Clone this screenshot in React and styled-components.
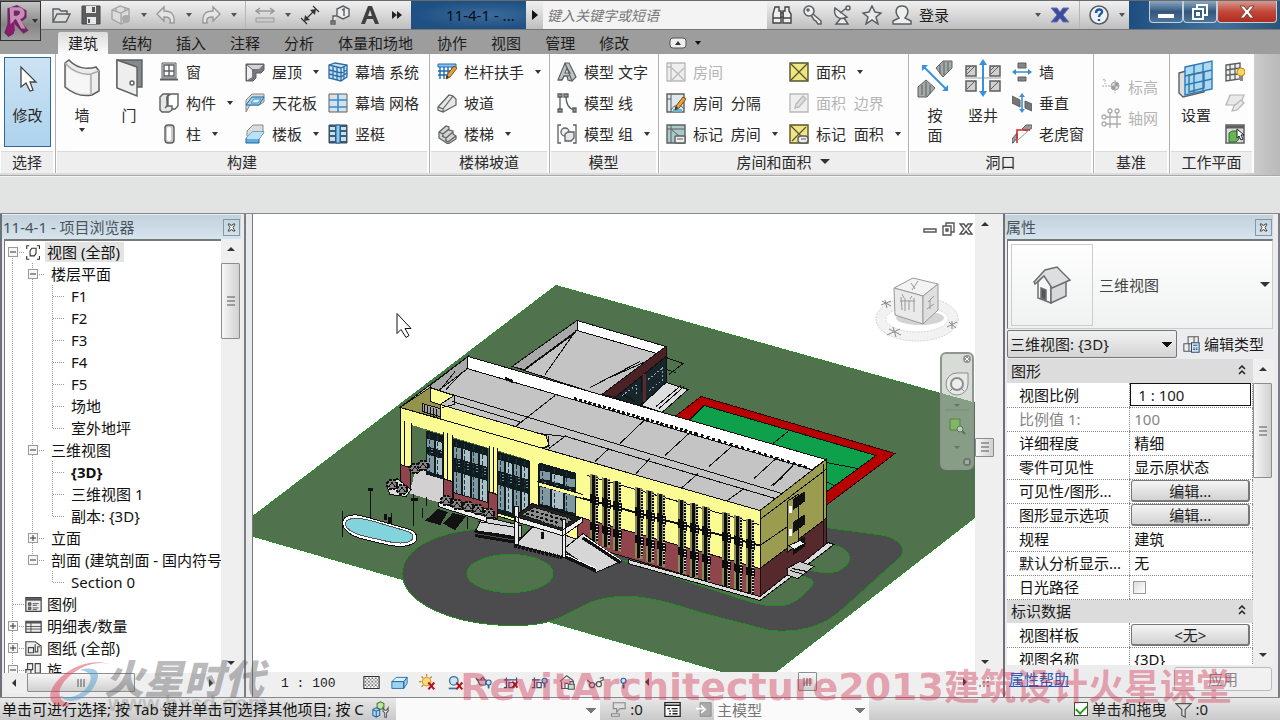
import React from "react";
import styled, { createGlobalStyle, css } from "styled-components";

const Global = createGlobalStyle`
  * { box-sizing: border-box; }
  html, body, #root { height: 100%; }
  body {
    margin: 0;
    overflow: hidden;
    font: 15px/20px "Noto Sans", "Noto Sans CJK SC", sans-serif;
    color: #1d1d1d;
    background: #e2e3e3;
  }
  button, input, select { font: inherit; color: inherit; margin: 0; border-radius: 0; }
  button { padding: 0; border: 0; background: none; white-space: pre; }
  svg { display: block; flex: none; }
`;

/* ---------- icons ---------- */

const K = "#5c5f61";
const G = "#e6e6e6";
const B = "#3a8ccb";
const S = "#a9d4ee";

const pencil = (
  <g>
    <path d="M9 17 L10 13 L17 4 L20 6 L13 15 Z" fill="#e9a33b" stroke="#7a4a12" strokeWidth="1" />
    <path d="M9 17 L10 13 L12 15 Z" fill="#333" />
  </g>
);

const ICONS = {
  window: <g fill="#fff" stroke={K}><path d="M3 1h14v15H3z" fill={G} /><path d="M5 3h5v6H5zM10 3h5v6h-5zM5 9h5v5H5zM10 9h5v5h-5z" strokeWidth="1.4" /><path d="M1 17.500h18" strokeWidth="2" /></g>,
  component: <g fill={G} stroke={K} strokeWidth="1.4"><path d="M9 3l3-2h7v12l-3 3H9z" fill="#fff" /><path d="M10 1H4L1 4v13l2 2h7l3-2v-4H8V4z" /><path d="M8 4v9l-2 2" /></g>,
  column: <g><rect x="6" y="1" width="9" height="18" rx="3" fill="#c9c9c9" stroke={K} strokeWidth="1.4" /><rect x="8" y="3" width="4" height="14" rx="2" fill="#fff" /></g>,
  roof: <g><path d="M1 2h18v6l-3 3h-5v5l-3 3H1z" fill="#77777d" stroke={K} /><path d="M2 3h16l-4 4H7v8l-5 3z" fill="#d4d4d8" /><path d="M2 3l5 4v8l-5 3z" fill="#efeff2" /><path d="M1 2l8 7" fill="none" stroke={K} /></g>,
  ceiling: <g><path d="M1 19V7l6-6h12v8l-5 3H5z" fill="#d8d8d8" stroke="#888" /><path d="M1 12l6-8h12l-5 8z" fill={S} stroke="#20659c" /><path d="M6 10l3-4h7l-3 4z" fill="#d9effb" stroke={B} /></g>,
  floor: <g><path d="M2 12V7l6-6h10v9" fill="#dcdcdc" stroke="#888" /><path d="M1 14l6-6h12l-5 7v4H1z" fill="#61aee0" stroke="#20659c" /><path d="M1 14l6-6h12l-5 7H3z" fill="#bce0f5" /></g>,
  curtain: <g fill="#c5e3f4" stroke="#2a6da5" strokeWidth="1.3"><path d="M1 3l6-2 12 2v12l-6 4-12-3z" /><path d="M13 6v13M1 3l12 3 6-3M1 8l12 3 6-3M1 12l12 3 6-4M5 4v13M9 5v13M16 5v12" fill="none" /></g>,
  curtainGrid: <g><path d="M1 1h18v18H1z" fill="#d5e2ea" stroke={K} /><path d="M10 1v18M1 7h18M1 14h18" stroke={B} strokeWidth="1.6" /></g>,
  mullion: <g><path d="M1 1h18v18H1z" fill="#3c5d74" stroke="#3b4a55" /><path d="M2 3h5v3H2zM2 8h5v3H2zM2 13h5v4H2zM13 3h5v3h-5zM13 8h5v3h-5zM13 13h5v4h-5z" fill="#c4dfee" /><path d="M8 1h4v18H8z" fill="#8dc9ee" stroke="#1f5f92" /></g>,
  railing: <g><path d="M1 2h18v3H1z" fill="#8dc3ea" stroke="#1f6cae" /><path d="M1 9h15M3 5v12M7 5v12M11 5v7M15 5v5M1 13h9" stroke="#1f6cae" strokeWidth="1.4" />{pencil}</g>,
  ramp: <g stroke={K} fill={G} strokeWidth="1.2"><path d="M1 14L12 2l4 1 3 3v6L6 19l-5-2z" /><path d="M1 14l5 2v3M6 16L16 3" fill="none" /></g>,
  stair: <g stroke={K} fill="#d2d2d2" strokeWidth="1.2"><path d="M2 8l7-6 3 1v3l4 1v3l3 2v3l-8 5-9-6z" /><path d="M2 8l4 2 6-5M5 12l4 2 7-6M8 16l3 2 8-6M6 10v3M9 14v3" fill="none" /></g>,
  modelText: <g stroke={K} strokeWidth="1.2"><path d="M1 18L8 1h4l7 14-4 4-4-1-1-4H7l-2 4z" fill="#bfc4c4" /><path d="M8 11l2-5 3 5z" fill="#fff" /><path d="M1 18h4l2-4h5M8 1l7 18" fill="none" /></g>,
  modelLine: <g fill="none" stroke={K} strokeWidth="1.3"><path d="M3 3v14M9 3c0 8 2 13 9 14" /><path d="M1 1h4v3H1zM1 16h4v3H1zM7 1h4v3H7zM16 15h3v4h-3z" fill="#999" /></g>,
  modelGroup: <g fill="none" stroke={K} strokeWidth="1.3"><path d="M4 1H1v18h3M16 1h3v18h-3" /><circle cx="8" cy="8" r="4" fill="#eee" /><path d="M8 10l3-2h6v6l-3 3H8z" fill={G} /></g>,
  roomOff: <g stroke="#b9b9b9" fill="#eee" strokeWidth="1.3"><path d="M1 1h18v18H1z" /><path d="M5 1v18M1 5h5M6 6l12 12M18 6L6 18" /></g>,
  roomSep: <g><path d="M1 1h17v18H1z" fill="#dbe8ec" stroke={K} strokeWidth="1.4" /><path d="M5 1v18M1 6h4M5 17c3-6 10-6 13-1" stroke={K} fill="none" /><path d="M7 16h9v3H7z" fill="#66b3da" />{pencil}</g>,
  roomTag: <g><path d="M1 1h18v18H1z" fill="#a9c9c8" stroke={K} strokeWidth="1.4" /><path d="M5 1v18M1 5h18" stroke={K} /><path d="M6 6l7 6" stroke={K} /><rect x="9" y="12" width="10" height="7" rx="1" fill="#eee" stroke={K} strokeWidth="1.4" /><path d="M11 15h6" stroke={K} /></g>,
  area: <g stroke="#57522c"><path d="M1 1h18v18H1z" fill="#eee583" strokeWidth="1.4" /><path d="M2 2l16 16M18 2L2 18" strokeWidth="1.2" /></g>,
  areaOff: <g stroke="#b9b9b9" fill="#efefef" strokeWidth="1.3"><path d="M1 1h18v18H1z" /><path d="M6 15l1-4 7-8 3 3-7 8z" fill="#ddd" /></g>,
  areaTag: <g><path d="M1 1h18v18H1z" fill="#eee583" stroke="#57522c" strokeWidth="1.4" /><path d="M2 2l15 15M17 3L3 17" stroke="#57522c" strokeWidth="1.2" /><rect x="9" y="12" width="10" height="7" rx="3" fill="#eee" stroke={K} strokeWidth="1.4" /><path d="M12 15h5" stroke={K} /></g>,
  openWall: <g><path d="M6 1h8v5H6zM6 15h8v4H6z" fill="#858585" stroke={K} /><path d="M2 10h16" stroke={B} strokeWidth="1.5" /><path d="M0 10l4-3v6zM20 10l-4-3v6z" fill={B} /></g>,
  vertical: <g><path d="M0 3l8 4v7l-8-4zM13 8l7 3v7l-7-3z" fill="#777" stroke={K} /><path d="M10 2v16" stroke="#3c92d8" strokeWidth="1.6" /><path d="M10 0l-3 4h6zM10 20l-3-4h6z" fill="#3c92d8" /></g>,
  dormer: <g><path d="M0 19v-4l5-6v5l-4 5zM10 5l4-4h6v3l-5 3z" fill="#999" stroke={K} /><path d="M5 19V6h13" fill="none" stroke="#d02b2b" strokeWidth="1.6" /><path d="M6 16L17 6" stroke="#999" /></g>,
  level: <g stroke="#aaa" fill="none"><path d="M1 9h17M2 3l2-1v5M14 3v13" strokeDasharray="2 1" /><circle cx="14" cy="9" r="4" fill="#ddd" /><path d="M14 5v4h4a4 4 0 0 0-4-4M14 13V9h-4a4 4 0 0 0 4 4" fill="#999" /></g>,
  grid: <g stroke="#aaa" fill="#fff" strokeWidth="1.3"><path d="M9 5v15M16 5v15M5 9h15M5 16h15" /><circle cx="9" cy="3" r="2" /><circle cx="16" cy="3" r="2" /><circle cx="3" cy="9" r="2" /><circle cx="3" cy="16" r="2" /></g>,
  showPlane: <g><path d="M1 3l14-2v16L1 19z" fill="#eee" stroke={K} strokeWidth="1.4" /><path d="M5 3v15M10 2v16M1 8l14-2M1 13l14-1" stroke={K} strokeWidth="1.3" /><circle cx="16" cy="10" r="4" fill="#ffd65a" stroke="#c48a16" /><path d="M15 14h3v5h-3z" fill="#888" /></g>,
  refPlane: <g stroke="#b3b3b3" fill="#e9e9e9" strokeWidth="1.2"><path d="M5 2h14l-4 10H1z" /><path d="M7 18l2-5 7-6 3 3-7 7z" /></g>,
  viewer: <g><path d="M1 1h18v18H1z" fill="#ddd" stroke={K} strokeWidth="1.5" /><path d="M1 3h18" stroke={K} strokeWidth="3" /><path d="M4 9l3-2h7v8l-3 3H4z" fill="#68b558" stroke="#2f6b28" /><path d="M12 5v9l2-2 2 4 2-1-2-4h3z" fill="#fff" stroke="#222" /></g>,
  open: <path d="M2 17V4h6l2 2h6v4M2 17l4-8h13l-4 8z" fill="#ddd" stroke={K} strokeWidth="1.4" />,
  save: <g><path d="M1 1h18v18H1z" fill="#5a5e61" stroke="#444" /><path d="M5 1h10v7H5zM6 12h9v7H6z" fill="#e8e8e8" /><path d="M11 2h3v5h-3zM7 14h2v4H7z" fill="#555" /></g>,
  box3d: <g stroke="#a2a2a2" fill="#dcdcdc" strokeWidth="1.3"><path d="M1 5l8-4 9 3v11l-8 4-9-5z" /><path d="M1 5l9 3 8-4M10 8v11M5 3v4M14 2v4" fill="none" /><circle cx="15" cy="14" r="4" fill="#aaa" stroke="none" /></g>,
  undo: <path d="M1 9l7-7v4c7 0 11 3 10 12h-4c1-5-1-6-6-6v4z" fill="#e5e5e5" stroke="#999" strokeWidth="1.4" />,
  redo: <path d="M19 9l-7-7v4C5 6 1 9 2 18h4c-1-5 1-6 6-6v4z" fill="#e5e5e5" stroke="#999" strokeWidth="1.4" />,
  measure: <g stroke="#999" fill="#ccc"><path d="M2 6h16M5 3L1 6l4 3M15 3l4 3-4 3" fill="none" strokeWidth="1.5" /><path d="M1 13h18v4H1z" /></g>,
  dimension: <g stroke="#333" strokeWidth="1.6"><path d="M5 15L15 5M1 13l6 6M13 1l6 6" strokeWidth="1.2" /><path d="M4 16l1-6 5 5zM16 4l-6 1 5 5z" fill="#333" stroke="none" /></g>,
  tag: <g stroke={K} fill="none" strokeWidth="1.4"><path d="M13 1l6 3v7l-6 3-6-3V4zM3 18v-7h4" fill="#eee" /><path d="M1 16h4v3H1zM12 5l2-1v7" /></g>,
  text: <path d="M1 19L8 1h4l7 18h-4l-2-5H7l-2 5zM8 11h4l-2-6z" fill="#404040" fillRule="evenodd" />,
  binoculars: <g stroke="#444" strokeWidth="1.4" fill="#eee"><path d="M3 2h4v4h2v12H1V9zM13 2h4v4l2 3v9h-8V6h2z" /><path d="M9 8h2v4H9zM1 13h8M11 13h8" /></g>,
  key: <g stroke={K} strokeWidth="1.5" fill="#eee"><path d="M11 9l8 7v3h-3l-2-3-2-1-3-5z" /><circle cx="7" cy="6" r="5" /><circle cx="6" cy="5" r="1" fill={K} /></g>,
  dish: <g stroke={K} strokeWidth="1.5" fill="#eee"><path d="M9 13l-5 6h12l-4-6" /><path d="M3 3c-2 8 4 13 12 9zM8 8l8-6" /><circle cx="16" cy="3" r="2" /></g>,
  star: <path d="M10 1l3 6 6 1-5 4 2 7-6-4-6 4 2-7-5-4 6-1z" fill="#e9e9e9" stroke={K} strokeWidth="1.5" />,
  person: <path d="M7 13c-5-6-3-12 3-12s8 6 3 12l6 3v3H1v-3z" fill="#eee" stroke={K} strokeWidth="1.5" />,
  exchange: <path d="M1 3h6l3 4 3-4h6l-6 7 6 7h-6l-3-4-3 4H1l6-7z" fill="#3c4b9e" stroke="#6a74ae" />,
  help: <g><circle cx="10" cy="10" r="9" fill="#eff3f7" stroke={K} strokeWidth="1.6" /><path d="M7 8c0-5 7-4 6-1 0 2-3 2-3 5M10 14v2" fill="none" stroke="#1c5aa8" strokeWidth="2.4" /></g>,
  binder: <g stroke="#333" fill="none" strokeWidth="1.3"><path d="M5 2H2v4M14 2h3v4M2 14v4h3M17 14v4h-3M6 8l2-3h5v6l-2 3H6z" /></g>,
  legend: <g stroke="#444" fill="#fff"><path d="M1 2h18v16H1z" fill="#eee" strokeWidth="1.4" /><path d="M1 4h18" strokeWidth="3" stroke="#555" /><path d="M4 8h3v3H4zM4 13h3v3H4z" fill="#777" /><path d="M9 9h7M9 11h5M9 14h7M9 16h5" /></g>,
  schedule: <g stroke="#444" fill="#eee"><path d="M1 4h18v13H1z" strokeWidth="1.4" /><path d="M1 5h18" strokeWidth="3" stroke="#555" /><path d="M1 10h18M1 13h18M7 6v11" /></g>,
  sheet: <g stroke="#444" fill="#eee" strokeWidth="1.3"><path d="M1 2h11l7 5v11H1z" /><path d="M4 9h6v6H4zM12 5v9h3V8h3" fill="none" /></g>,
  family: <g stroke="#444" fill="#eee" strokeWidth="1.4"><path d="M1 9h6v8H1zM3 2h6v7H3zM12 2h6v11h-6zM9 15h9" /></g>,
  editType: <g stroke="#555" fill="#eee" strokeWidth="1.2"><path d="M6 1h7v8H6zM13 1h5v8h-5zM1 9h6v9H1zM7 9h5v9H7z" /><path d="M10 8h9v11h-9z" fill="#d8e8f6" stroke="#274e78" /><path d="M12 11h5M12 14h2M15 14h2M12 16h2M15 16h2" stroke="#274e78" /></g>,
  hatch: <g><path d="M1 3h18v14H1z" fill="#fff" stroke="#333" strokeWidth="1.3" /><path d="M2 5h17M2 9h17M2 13h17" stroke="#777" strokeWidth="2" strokeDasharray="2 2" /><path d="M4 7h14M4 11h14M4 15h14" stroke="#999" strokeWidth="2" strokeDasharray="2 2" /></g>,
  cube: <g stroke="#20659c" fill="#9bd3f3"><path d="M1 9l5-5h13l-4 5z" fill="#d9f0fb" /><path d="M1 9h14v8H1zM15 9l4-5v7l-4 6z" /></g>,
  sunOff: <g><circle cx="9" cy="9" r="5" fill="#fbd878" stroke="#c68614" /><path d="M9 0v3M0 9h3M3 3l2 2M15 3l-2 2M3 15l2-2" stroke="#c68614" strokeWidth="1.5" /><path d="M11 10l7 8M18 10l-7 8" stroke="#b1121d" strokeWidth="2.4" /></g>,
  shadowOff: <g><circle cx="8" cy="8" r="5" fill="#cbe3f5" stroke="#3c6f9e" strokeWidth="1.5" /><path d="M2 17h9" stroke="#3c6f9e" strokeWidth="2" /><path d="M11 10l7 8M18 10l-7 8" stroke="#b1121d" strokeWidth="2.4" /></g>,
  teapot: <g stroke="#555" fill="#eee" strokeWidth="1.3"><path d="M1 5l3 2h9l-1 6H6L4 9zM6 7l3-3 3 3" /><circle cx="16" cy="10" r="3" fill="#cfe4fa" stroke="#27619c" /><path d="M16 13v4" stroke="#27619c" strokeWidth="2" /></g>,
  cropOff: <g stroke="#3a4c70" fill="none" strokeWidth="1.4"><path d="M1 7h15M4 4v12M1 16h4M7 10h6v6H7zM16 4v12" /><path d="M11 9l6 7M17 9l-6 7" stroke="#b1121d" strokeWidth="2" /></g>,
  crop: <g stroke="#3a4c70" fill="none" strokeWidth="1.4"><path d="M1 7h10M4 4v12M1 16h4M7 10h5v6H7z" /><circle cx="16" cy="8" r="3" fill="#cfe4fa" stroke="#27619c" /><path d="M16 11v5" stroke="#27619c" strokeWidth="2" /></g>,
  lockHouse: <g stroke="#555" fill="#eee" strokeWidth="1.3"><path d="M1 9l8-7 8 6M3 9v8h8M7 17v-6h4" /><path d="M11 12h7v6h-7z" fill="#c9dccd" /><path d="M13 12V9h4v3" fill="none" /></g>,
  glasses: <g stroke="#555" fill="none" strokeWidth="1.4"><path d="M0 7l5 4M9 12h2M15 9l4-2V4l-4 1" /><circle cx="6" cy="13" r="3" /><circle cx="14" cy="12" r="3" /></g>,
  bulb: <g><circle cx="10" cy="8" r="3" fill="#cfe4fa" stroke="#27619c" strokeWidth="1.4" /><path d="M10 12v5" stroke="#27619c" strokeWidth="2.4" /></g>,
  worksets: <g stroke="#27619c" fill="#a9d8f2" strokeWidth="1.2"><path d="M6 3l4-2 4 2v5l-4 2-4-2z" fill="#c0e6a5" stroke="#3e7c24" /><path d="M1 10l4-2 4 2v7l-4 2-4-2zM1 10l4 2 4-2M5 12v7" /><path d="M13 8v4l2 2v5h2v-5l2-2V8l-2 3h-2z" fill="#eee" stroke="#555" /></g>,
  request: <g stroke="#888" fill="#ddd" strokeWidth="1.3"><path d="M5 2h14v7h-6l-4 4V9H5zM3 18v-3h9v3z" /></g>,
  options: <g stroke="#222" fill="#fff" strokeWidth="1.5"><path d="M1 2h18v16H1z" /><path d="M1 5h18M4 9h3M9 9h7M6 12h2M10 12h6M6 15h2M10 15h6" /></g>,
  pick: <g><path d="M6 2h13v16H6z" fill="#aaa" stroke="#888" /><path d="M1 9h9M7 5l5 5-5 4" stroke="#fff" strokeWidth="2" fill="none" /></g>,
  filter: <path d="M1 3h18l-7 7v9l-4-2v-7z" fill="#ddd" stroke="#555" strokeWidth="1.4" />,
};

const Glyph = ({ name, size = 20 }) => (
  <svg width={size} height={size} viewBox="0 0 20 20" fill="none" aria-hidden="true">{ICONS[name]}</svg>
);

const BIG = {
  cursor: <path d="M13 6v20l5-4 4 8 3-1-3-8h6z" fill="#fff" stroke="#444" strokeWidth="1.3" transform="translate(-2 2)" />,
  wall: <g stroke={K} strokeWidth="1.5"><path d="M1 4l4-3c7 8 18 10 27 7l3 4v20l-7 4C18 38 8 34 1 28z" fill="#ececec" /><path d="M1 4c7 8 17 12 26 11l8-3M27 15v21" fill="none" stroke="#aaa" /><path d="M3 8c7 7 15 9 22 9v17c-8 1-16-2-22-7z" fill="#f6f6f6" stroke="none" /></g>,
  door: <g stroke={K} strokeWidth="1.4"><path d="M6 1h25v27H6z" fill="#84898e" /><path d="M6 1l20 7v29L6 29z" fill="#eeeeee" /><circle cx="21" cy="24" r="2" fill="#fff" /></g>,
  byFace: <g><path d="M19 9l7-7h9v7l-9 9zM1 28l8-7 9 8-8 9H1z" fill="#a3aaa7" stroke={K} /><path d="M23 6v9M27 3v13M31 3v9M5 26v10M9 23v14M13 26v9" stroke={K} /><path d="M7 8l22 22" stroke="#3791df" strokeWidth="2" /><path d="M5 6h6l-6 6zM31 32h-6l6-6z" fill="#3791df" /></g>,
  shaft: <g><path d="M1 7h10v10H1zM25 7h10v10H25zM1 22h10v10H1zM25 22h10v10H25z" fill="#d0d0d0" stroke={K} strokeWidth="1.5" /><path d="M2 15l8-8M26 15l8-8M2 30l8-8M26 30l8-8M2 11l4-4M26 11l4-4" stroke={K} /><path d="M0 19h36" stroke="#ccc" strokeWidth="2" /><path d="M18 3v32" stroke="#3791df" strokeWidth="2" /><path d="M18 0l-4 6h8zM18 38l-4-6h8z" fill="#3791df" /></g>,
  set: <g stroke="#277bbd" strokeWidth="1.4"><path d="M1 14l7-2h18v21L5 38l-4-4z" fill="#ddd" stroke={K} /><path d="M7 8l27-6v28L7 36z" fill="#add8f0" /><path d="M16 6v28M25 4v28M7 17l27-6M7 26l27-6" /><path d="M11 16l15-3v16l-15 4z" fill="none" stroke="#397399" /></g>,
};

/* ---------- title bar ---------- */

const Shell = styled.div`
  position: relative;
  height: 100vh;
  display: flex;
  flex-direction: column;
  overflow: hidden;
`;
const TitleBar = styled.header`
  display: flex;
  align-items: stretch;
  height: 30px;
  flex: none;
  border-top: 1px solid #6a6a6a;
  border-bottom: 1px solid #777;
  background: linear-gradient(#f0f0f0, #d8d8d8 50%, #bebebe);
`;
const Caret = styled.span`
  width: 0;
  height: 0;
  flex: none;
  border: 3px solid transparent;
  border-top: 4px solid ${(p) => p.$color || "#333"};
  border-bottom: 0;
`;
const AppButton = styled.button`
  position: relative;
  z-index: 2;
  width: 41px;
  height: 40px;
  margin-right: 5px;
  display: flex;
  align-items: center;
  gap: 2px;
  padding-left: 3px;
  border: 1px solid #333;
  background: linear-gradient(#c4c4c4, #858585 60%, #a0a0a0);
`;
const QuickButton = styled.button`
  width: ${(p) => (p.$wide ? "24px" : "30px")};
  flex: none;
  display: grid;
  place-items: center;
`;
const ArrowButton = styled.button`
  width: 15px;
  flex: none;
  display: grid;
  place-items: center;
`;
const Divider = styled.span`
  width: 1px;
  margin: 0 4px;
  background: #b5b5b5;
`;
const DocName = styled.div`
  width: 115px;
  flex: none;
  padding: 4px 0 0 35px;
  margin-left: 2px;
  color: #050d18;
  background: radial-gradient(ellipse at 65% 50%, #3d6b9a, #1e5084 70%);
`;
const NextButton = styled.button`
  width: 17px;
  flex: none;
  display: grid;
  place-items: center;
`;
const Search = styled.input`
  width: 224px;
  padding: 4px 4px 2px;
  border: 0;
  outline: 0;
  background: #f3f3f3;
  font-size: 14px;
  font-style: italic;
  &::placeholder { color: #777; opacity: 1; }
`;
const Login = styled.button`
  flex: 1;
  min-width: 40px;
  text-align: left;
  padding-left: 2px;
`;
const Caption = styled.div`
  width: 151px;
  flex: none;
  display: flex;
  align-items: flex-start;
  justify-content: flex-end;
  padding-right: 3px;
  background: linear-gradient(100deg, #1d4d80, #3f719d 60%, #2b5379);
`;
const CaptionButton = styled.button`
  width: ${(p) => (p.$close ? "60px" : "34px")};
  height: 22px;
  display: grid;
  place-items: center;
  border: 1px solid #c3d0dc;
  border-top: 0;
  border-radius: 0 0 4px 4px;
  background: ${(p) => (p.$close ? "linear-gradient(#d59a90, #c3483a 50%, #b02c20)" : "linear-gradient(#8ca9c3, #34587d 50%, #4d7398)")};
`;

/* ---------- ribbon ---------- */

const TabBar = styled.nav`
  display: flex;
  align-items: flex-end;
  height: 24px;
  flex: none;
  padding-left: 56px;
  background: #9d9d9d;
`;
const Tab = styled.button`
  height: 22px;
  padding: 0 10px;
  margin: 0 2px;
  line-height: 20px;
  ${(p) => p.$active && css`background: linear-gradient(#dcdcdc, #fcfcfc); border-radius: 2px 2px 0 0;`}
`;
const RibbonToggle = styled.button`
  display: flex;
  align-items: center;
  gap: 8px;
  height: 22px;
  margin-left: 28px;
`;
const Ribbon = styled.section`
  display: flex;
  height: 122px;
  flex: none;
  padding-bottom: 2px;
  background: linear-gradient(90deg, #dcdcdc 96%, #b9b9b9);
  border-bottom: 1px solid #a9a9a9;
`;
const Panel = styled.section`
  width: ${(p) => p.$w}px;
  flex: none;
  display: flex;
  flex-direction: column;
  background: #fdfdfd;
  border-left: ${(p) => (p.$first ? "0" : "1px solid #b0b0b0")};
`;
const PanelBody = styled.div`
  flex: 1;
  display: flex;
  padding: 2px 0 0 ${(p) => p.$pad || 0}px;
`;
const PanelTitle = styled.h2`
  margin: 0 2px 0 1px;
  height: 22px;
  padding-bottom: 2px;
  display: flex;
  align-items: center;
  justify-content: center;
  gap: 8px;
  font-size: 15px;
  line-height: 20px;
  font-weight: 400;
  color: #2b2b2b;
  background: #eeeeee;
  border-top: 1px solid #dadada;
  ${Caret} { border-width: 5px 5px 0; }
`;
const ToolColumn = styled.div`
  width: ${(p) => p.$w}px;
  flex: none;
  display: flex;
  flex-direction: column;
  padding-top: ${(p) => p.$top || 0}px;
`;
const Indent = styled.div`
  display: flex;
  flex-direction: column;
  padding-left: ${(p) => p.$n || 8}px;
`;
const ToolButton = styled.button`
  display: flex;
  align-items: center;
  height: 31px;
  gap: 7px;
  padding-left: 1px;
  color: ${(p) => (p.disabled ? "#b4b4b4" : "#2b2b2b")};
  ${Caret} { margin-left: 4px; }
`;
const LargeButton = styled.button`
  width: ${(p) => p.$w}px;
  flex: none;
  display: flex;
  flex-direction: column;
  align-items: center;
  justify-content: flex-start;
  padding-top: 3px;
  line-height: 20px;
  white-space: pre-line;
  color: #2b2b2b;
  svg { margin-bottom: 6px; }
  ${Caret} { margin-top: 3px; }
  ${(p) => p.$on && css`
    height: 90px;
    margin-top: 1px;
    padding-top: 1px;
    border: 1px solid #31689a;
    background: linear-gradient(#cce3f3, #aed3ec);
  `}
`;
const OptionsBar = styled.div`
  height: 38px;
  flex: none;
  background: #e2e4e4;
  border-top: 1px solid #f3f3f3;
  border-bottom: 1px solid #85898c;
`;

const Tool = ({ icon, label, arrow, disabled, title }) => (
  <ToolButton disabled={disabled} title={title}>
    <Glyph name={icon} />
    {label}
    {arrow && <Caret />}
  </ToolButton>
);
const Large = ({ icon, label, w, arrow, on }) => (
  <LargeButton $w={w} $on={on}>
    <svg width="36" height="40" viewBox="0 0 36 40" fill="none" aria-hidden="true">{BIG[icon]}</svg>
    {label}
    {arrow && <Caret />}
  </LargeButton>
);

/* ---------- docked palettes ---------- */

const Workspace = styled.main`
  flex: 1;
  min-height: 0;
  display: flex;
  background: #e9eaec;
`;
const Dock = styled.aside`
  width: ${(p) => p.$w}px;
  flex: none;
  display: flex;
  flex-direction: column;
  padding: 1px ${(p) => p.$right}px 4px 2px;
  border-left: 2px solid #6e7276;
  border-right: 2px solid #7a7e82;
  background: #ececee;
`;
const DockTitle = styled.div`
  display: flex;
  align-items: center;
  justify-content: space-between;
  height: 24px;
  flex: none;
  margin-left: -2px;
  padding: 0 1px;
  color: #4a545d;
  background: linear-gradient(#c3d1dc, #d6e4ee);
`;
const CloseButton = styled.button`
  width: 17px;
  height: 17px;
  display: grid;
  place-items: center;
  border: 1px solid #8097ac;
`;
const Row = styled.div`
  flex: ${(p) => (p.$grow ? "1" : "none")};
  min-height: 0;
  display: flex;
`;
const Tree = styled.div`
  flex: 1;
  min-width: 0;
  overflow: hidden;
  background: #fff;
  border-left: 1px solid #777;
  border-top: 2px solid #777;
`;
const TreeRow = styled.div`
  display: flex;
  align-items: center;
  height: 22px;
  white-space: nowrap;
  color: #111;
  font-weight: ${(p) => (p.$bold ? 700 : 400)};
`;
const dots = "repeating-linear-gradient(#999 0 1px, transparent 1px 2px)";
const dotsAcross = "repeating-linear-gradient(90deg, #999 0 1px, transparent 1px 2px)";
const Guide = styled.span`
  width: 20px;
  height: 22px;
  flex: none;
  display: flex;
  align-items: center;
  padding-left: 3px;
  background-repeat: no-repeat;
  background-image: ${dots}, ${dotsAcross};
  background-position: 7px ${(p) => (p.$kind === "root" ? "11px" : "0")}, 8px 11px;
  background-size:
    1px ${(p) => ({ end: "11px", root: "11px", none: "0" }[p.$kind] || "22px")},
    ${(p) => (["line", "none"].includes(p.$kind) ? "0" : "12px")} 1px;
`;
const Expander = styled.button`
  width: 10px;
  height: 10px;
  border: 1px solid #999;
  background: #f6f6f6;
  display: grid;
  place-items: center;
`;
const TreeLabel = styled.span`
  padding: 0 4px 0 ${(p) => (p.$icon ? 5 : 6)}px;
  background: ${(p) => (p.$selected ? "linear-gradient(#e3e3e3, #e3e3e3) 3px 0 no-repeat" : "none")};
`;

const TREE = [
  { g: ["root"], x: "-", icon: "binder", t: "视图 (全部)", sel: true },
  { g: ["line", "tee"], x: "-", t: "楼层平面" },
  ...["F1", "F2", "F3", "F4", "F5", "场地"].map((t) => ({ g: ["line", "line", "tee"], t })),
  { g: ["line", "line", "end"], t: "室外地坪" },
  { g: ["line", "tee"], x: "-", t: "三维视图" },
  { g: ["line", "line", "tee"], t: "{3D}", bold: true },
  { g: ["line", "line", "tee"], t: "三维视图 1" },
  { g: ["line", "line", "end"], t: "副本: {3D}" },
  { g: ["line", "tee"], x: "+", t: "立面" },
  { g: ["line", "end"], x: "-", t: "剖面 (建筑剖面 - 国内符号)" },
  { g: ["line", "none", "end"], t: "Section 0" },
  { g: ["tee"], icon: "legend", t: "图例" },
  { g: ["tee"], x: "+", icon: "schedule", t: "明细表/数量" },
  { g: ["tee"], x: "+", icon: "sheet", t: "图纸 (全部)" },
  { g: ["tee"], x: "-", icon: "family", t: "族" },
];

/* ---------- scroll bars ---------- */

const Bar = styled.div`
  flex: ${(p) => (p.$grow ? "1" : "none")};
  display: flex;
  flex-direction: ${(p) => (p.$across ? "row" : "column")};
  ${(p) => (p.$across ? "height: 20px; min-width: 0;" : "width: 20px;")}
  background: #efefef;
`;
const BarButton = styled.button`
  width: 20px;
  height: 20px;
  flex: none;
  display: grid;
  place-items: center;
`;
const BarSpace = styled.span`
  flex: ${(p) => p.$n};
`;
const Thumb = styled.span`
  display: grid;
  place-items: center;
  flex: none;
  border: 1px solid #8d8d8d;
  border-radius: 1px;
  ${(p) => (p.$across
    ? css`width: ${p.$len}px; height: 19px; background: linear-gradient(#f7f7f7, #d0d0d0);`
    : css`height: ${p.$len}px; width: 19px; background: linear-gradient(90deg, #f7f7f7, #d0d0d0);`)}
`;
const ARROWS = { up: "M1 7l4-4 4 4z", down: "M1 3l4 4 4-4z", left: "M7 1L3 5l4 4z", right: "M3 1l4 4-4 4z" };
const Arrow = ({ dir }) => (
  <svg width="10" height="10" viewBox="0 0 10 10"><path d={ARROWS[dir]} fill="#333" /></svg>
);
const Scroll = ({ across, len, before = 0, after = 1, grow }) => (
  <Bar $across={across} $grow={grow}>
    <BarButton aria-label="back"><Arrow dir={across ? "left" : "up"} /></BarButton>
    <BarSpace $n={before} />
    <Thumb $across={across} $len={len}>
      <svg width="10" height="10" viewBox="0 0 10 10">
        <path d={across ? "M2 1v8M5 1v8M8 1v8" : "M1 1h8M1 5h8M1 9h8"} stroke="#555" />
      </svg>
    </Thumb>
    <BarSpace $n={after} />
    <BarButton aria-label="forward"><Arrow dir={across ? "right" : "down"} /></BarButton>
  </Bar>
);

/* ---------- 3D view ---------- */

const ViewFrame = styled.section`
  flex: 1;
  min-width: 0;
  display: flex;
  flex-direction: column;
  margin-left: 6px;
  padding: 0 8px 4px 0;
  border-left: 1px solid #777;
  background: #efefef;
`;
const Canvas = styled.div`
  position: relative;
  flex: 1;
  min-width: 0;
  overflow: hidden;
  background: #fff;
  > svg { width: 100%; height: 100%; }
`;
const WindowControls = styled.div`
  position: absolute;
  top: 8px;
  right: 2px;
  display: flex;
  gap: 4px;
`;
const ViewCube = styled.div`
  position: absolute;
  top: 60px;
  right: 14px;
`;
const NavBar = styled.div`
  position: absolute;
  top: 138px;
  right: 1px;
`;
const ViewControls = styled.div`
  display: flex;
  height: 21px;
  flex: none;
  background: #efefef;
`;
const Scale = styled.button`
  width: 104px;
  flex: none;
  padding: 3px 0 0 28px;
  text-align: left;
  font: 13px/18px "Liberation Mono", monospace;
`;
const ViewButton = styled.button`
  width: 28px;
  flex: none;
  display: grid;
  place-items: center;
`;

const edge = (x) => 408 + 0.286 * (x - 400);
const STRIPS = [590, 602, 613, 635, 646, 657, 678, 690, 702, 722, 734, 746];

const Strip = ({ x }) => {
  const top = edge(x) + 12;
  const len = 68 + (x - 590) * 0.06;
  return (
    <g>
      <path d={`M${x} ${top}l8 2v${len}l-8-2z`} fill="#8a8a58" />
      <path d={`M${x + 2} ${top + 1}h3v${len}h-3z`} fill="#0c0c0c" />
      <path d={`M${x} ${top + 20}l9 3v9l-9-3zM${x} ${top + 48}l9 3v8l-9-3z`} fill="#0c0c0c" />
      <path d={`M${x + 7} ${top + 3}v${len - 4}`} stroke="#111" strokeWidth="2" />
      <path d={`M${x + 7} ${top + 4}v${len - 6}`} stroke="#ddd" strokeWidth="2" strokeDasharray="1 2" />
    </g>
  );
};

const Glass = ({ x, y, w, h, cols }) => (
  <g>
    <path d={`M${x} ${y}l${w} ${w * 0.28}v${h}l${-w} ${-w * 0.28}z`} fill="#101b20" />
    {Array.from({ length: cols }, (_, i) => {
      const s = w / cols;
      const px = x + i * s + 1;
      const py = y + i * s * 0.28;
      return (
        <g key={i} fill={i % 2 ? "#a9bec5" : "#7f98a1"}>
          <path d={`M${px} ${py + 8}l${s - 2} 2v${h * 0.18}l${2 - s}-2z`} />
          <path d={`M${px} ${py + h * 0.54}l${s - 2} 2v${h * 0.38}l${2 - s}-2z`} />
          <path d={`M${px + 2} ${py + 3}v${h - 6}`} stroke="#1d3640" strokeDasharray="4 2" />
          <path d={`M${px + 5} ${py + h * 0.36}v${h * 0.14}`} stroke="#6f8f9a" strokeWidth="2" strokeDasharray="1 2" />
        </g>
      );
    })}
  </g>
);

const Shrub = ({ x, y }) => (
  <g>
    <circle cx={x} cy={y} r="5" fill="#858585" stroke="#111" strokeWidth="2" strokeDasharray="3 1" />
    <path d={`M${x - 3} ${y + 2}l3-4 3 4`} stroke="#111" fill="none" />
  </g>
);

const Scene = () => (
  <svg viewBox="253 214 722 459" preserveAspectRatio="xMidYMid slice" role="img" aria-label="3D" shapeRendering="crispEdges">
    <path d="M556 286L980 405V514L775 673H725L250 536V519z" fill="#50734d" stroke="#2d8a2d" />
    {/* drive and planted islands */}
    <path d="M402 574C404 548 436 531 490 529L640 560 760 560 826 528 885 536C902 541 906 550 900 558L840 612C822 627 800 634 770 631L700 613C650 596 620 592 590 603 565 615 555 625 520 626 455 627 404 605 402 574z" fill="#4c4b4d" stroke="#228b22" />
    <ellipse cx="510" cy="574" rx="43" ry="19" fill="#50734d" stroke="#228b22" />
    <path d="M620 560L740 599C775 611 790 607 800 598 815 585 820 580 800 576L760 590zM820 547C846 542 856 558 845 567 835 576 822 574 808 570z" fill="#50734d" stroke="#228b22" />
    {/* court */}
    <path d="M675 417L701 397 895 454 822 509z" fill="#b80000" stroke="#300" />
    <path d="M688 422L704 406 876 456 824 494z" fill="#0fa04b" stroke="#111" />
    <path d="M788 432l-15 12M826 463l32 6M826 482l8 4" stroke="#111" />
    {/* rear wing */}
    <g stroke="#111" fill="#c4c4c4">
      <path d="M577 321L512 367 602 396 666 347z" />
      <path d="M577 321L512 367 524 370 577 331z" fill="#a9a9a9" />
      <path d="M577 321l89 26-9 7-80-23z" fill="#fff" />
      <path d="M576 333L524 371M576 331L545 375M640 362l-50 26M655 358l-45 20" fill="none" />
      <path d="M666 347v10l-51 41-13-3z" fill="#4a2225" />
      <path d="M666 357v28l-28 22-23-9z" fill="#18262c" />
      <path d="M641 376v16M621 394l14 8M666 358l17 6-14 11M666 370l10 3" fill="none" />
      <path d="M644 374v28" stroke="#5a2a2d" strokeWidth="3" />
      <path d="M648 380l14-11v12l-14 11M622 396l14-10v10" stroke="#87abb7" fill="none" strokeDasharray="2 2" />
      <path d="M666 383l22 7-26 23-21-7z" fill="#dedede" />
      <path d="M684 387l-25 22M681 386l-25 21" fill="none" />
    </g>
    {/* main roof */}
    <g stroke="#111" fill="#c4c4c4">
      <path d="M468 357L826 460 760 511 400 408z" />
      <path d="M468 357v12l-35 26-3-9z" fill="#a9a9a9" />
      <path d="M468 357l358 103-14 10-345-101z" fill="#fff" />
      <path d="M574 399l121 35" strokeWidth="3" strokeDasharray="3 2" />
      <path d="M695 434l115 35" strokeWidth="3" strokeDasharray="3 3" />
      <path d="M452 395l330 99M452 402l70 21M520 423l-5 5M555 396l-42 33M645 420l-25 24M690 433l-25 23M733 446l-24 21M776 459l-22 20M793 466l-20 20M609 449l-14 13M650 459l-14 15M698 474l-17 15M744 489l-18 13M566 437l216 64M520 432l46 5M566 436l-17 13M783 478l-12 8M455 372l-16 20M462 373l-16 17" fill="none" />
      <path d="M505 379l8 3M790 492l14-10M794 494l14-10" strokeWidth="3" fill="none" />
    </g>
    {/* terrace */}
    <g stroke="#111">
      <path d="M430 388l-30 20 40 11v-14l-10-3z" fill="#93934c" />
      <path d="M430 388l24 8-14 9-10-3z" fill="#fbfb93" />
      <path d="M440 405l106 31 3 10-11 4-98-28z" fill="#fbfb93" />
      <path d="M422 404l18 5v8l-18-5z" fill="#a0a0a0" />
      <path d="M424 405v8M427 406v8M430 407v8M433 408v8M436 409v8" />
      <path d="M454 396v9l-12 3M548 436v11l-11 6" fill="none" />
    </g>
    {/* front */}
    <path d="M400 408l360 103v87L400 486z" fill="#fbfb93" stroke="#111" />
    <path d="M577 517l183 52v29L577 543z" fill="#8f454b" stroke="#111" />
    <path d="M576 497l184 49" stroke="#111" strokeWidth="2" />
    <path d="M587 476l172 49" stroke="#111" />
    <path d="M410 425l114 34v63l-114-37z" fill="#50734d" />
    <path d="M416 466l42 13v30l-48-15z" fill="#d2d0d0" />
    <Glass x={426} y={431} w={17} h={44} cols={2} />
    <Glass x={453} y={439} w={35} h={61} cols={4} />
    <Glass x={497} y={452} w={32} h={62} cols={4} />
    <Glass x={539} y={463} w={37} h={45} cols={3} />
    <path d="M537 484l46 13" stroke="#fbfb93" strokeWidth="3" />
    <path d="M537 482l46 13" stroke="#111" />
    <g stroke="#111" fill="#fbfb93">
      <path d="M400 417h11v50h-11zM443 431h9v51h-9zM489 445h8v50h-8z" />
      <path d="M404 419v48M447 433v48M493 446v48M529 461v55M538 464v50" />
      <path d="M400 465l10 3v23l-10-3zM443 479l9 3v24l-9-3zM488 492l9 3v24l-9-3zM453 493l35 10v7l-35-10z" fill="#8f454b" />
    </g>
    <path d="M401 409l136 39v12L401 420z" fill="#fbfb93" />
    {STRIPS.map((x) => <Strip key={x} x={x} />)}
    {/* gable side */}
    <g stroke="#111">
      <path d="M760 511l66-51v61l-66 48z" fill="#9c9c50" />
      <path d="M760 569l66-50v26l-66 52z" fill="#56292c" />
      <path d="M760 520l66-50M760 546l32-22M823 464v82" />
      <path d="M787 502l11-7v50l-11 8z" fill="#9c9c50" />
      <path d="M793 500l11-7v9l-11 8zM793 523l11-7v9l-11 8zM793 545l11-7v9l-11 8z" fill="#111" />
      <path d="M790 506v7M790 529v7" stroke="#fff" strokeWidth="3" />
      <path d="M789 546l11-5 5 3-11 6z" fill="#eee" />
      <path d="M628 560l132 37 68-54 6 2-74 56-132-37z" fill="#ddd" />
      <path d="M787 569l13-7 14 5-16 12-10-3z" fill="#ccc" />
      <path d="M790 571l14 4M792 569l15 3" />
    </g>
    {/* entrance */}
    <g stroke="#111" fill="#d6d6d6">
      <path d="M475 532l8-15 38 9v12l-32-5zM478 522l38 6" />
      <path d="M475 532l42 7M475 536l42 7" strokeWidth="3" />
      <path d="M515 545l20-20 48 17-20 16z" />
      <path d="M514 546l48 12" strokeWidth="4" strokeDasharray="3 1" />
      <path d="M563 550l20-16 38 28-25 11z" />
      <path d="M563 556l33 15M583 538l38 25" strokeWidth="4" />
      <path d="M563 554l33 15M583 536l38 25" stroke="#fff" />
      <path d="M515 517l17-13 50 15-20 14z" fill="#202020" />
      <path d="M522 515l12-7 38 12-12 8z" fill="#8a8e8c" strokeDasharray="2 2" />
      <path d="M526 514l34 10M531 511l34 10" strokeWidth="2" strokeDasharray="3 2" />
      <path d="M515 517l47 14v5l-47-14zM562 531l20-13v5l-20 14zM514 507h4v38h-4zM562 520h3v38h-3z" fill="#eee" />
      <path d="M542 532v7" strokeWidth="3" />
    </g>
    {/* planting and furniture */}
    <g stroke="#111" fill="#999">
      <path d="M387 487l10-8 14 11-5 7-16-2z" fill="#ddd" />
      <Shrub x={392} y={485} /><Shrub x={402} y={490} /><Shrub x={415} y={469} /><Shrub x={423} y={466} />
      <path d="M438 503l48 14v5l-48-15z" fill="#eee" />
      <Shrub x={446} y={501} /><Shrub x={457} y={505} /><Shrub x={468} y={507} /><Shrub x={478} y={510} /><Shrub x={489} y={514} />
      <path d="M426 521l12-11 9 3-7 12zM444 524l9-10 12 3-10 13z" fill="#111" />
      <path d="M413 494v32M422 508v10M426 497v9M467 517v12M370 488v45M391 513v20M342 511v26" strokeWidth="1" />
      <path d="M411 500h7M368 490h5M389 517v6M385 520v-6" strokeWidth="3" />
      <path d="M345 518C352 513 362 516 375 520L410 530C419 534 420 543 408 546 397 549 382 544 365 540 350 537 337 527 345 518z" fill="#fff" />
      <path d="M347 521C353 517 362 519 374 522L408 532C415 535 415 541 406 543 397 545 383 541 366 537 352 534 341 527 347 521z" fill="#82d3dc" stroke="#555" />
    </g>
    {/* pointer */}
    <path d="M397 314v20l4-4 5 8 3-2-4-7h6z" fill="#fff" stroke="#111" shapeRendering="auto" />
  </svg>
);

/* ---------- properties ---------- */

const TypeSelector = styled.button`
  display: flex;
  align-items: center;
  gap: 6px;
  width: 100%;
  height: 90px;
  flex: none;
  padding: 3px 2px 3px 3px;
  color: #444;
  text-align: left;
  background: linear-gradient(#fff, #f0f1f1);
  border: 1px solid #ccc;
  border-top: 2px solid #777;
  border-left-color: #777;
  ${Caret} { margin-left: auto; border-width: 5px 5px 0; }
`;
const Preview = styled.span`
  width: 82px;
  height: 82px;
  display: grid;
  place-items: center;
  border: 1px solid #ccc;
`;
const Instance = styled.div`
  display: flex;
  align-items: center;
  gap: 6px;
  height: 30px;
  flex: none;
`;
const selectSkin = css`
  appearance: none;
  outline: 0;
  background-repeat: no-repeat;
`;
const caretImage = (c) => `linear-gradient(45deg, transparent 50%, ${c} 51%), linear-gradient(-45deg, transparent 50%, ${c} 51%)`;
const InstanceSelect = styled.select`
  ${selectSkin}
  width: 170px;
  height: 28px;
  padding: 0 2px;
  border: 1px solid #777;
  border-radius: 2px;
  background-image: ${caretImage("#111")}, linear-gradient(#f2f2f2, #d4d4d4);
  background-size: 6px 6px, 6px 6px, 100% 100%;
  background-position: right 9px top 11px, right 3px top 11px, 0 0;
`;
const EditType = styled.button`
  display: flex;
  align-items: center;
  gap: 4px;
`;
const Chevrons = styled.span`
  display: inline-block;
  float: right;
  padding: 4px 3px 0 0;
`;
const TableBox = styled.div`
  flex: 1;
  min-width: 0;
  overflow: hidden;
`;
const PropertyTable = styled.table`
  width: 100%;
  table-layout: fixed;
  border-collapse: collapse;
  background: #fff;
  th, td {
    height: 24px;
    padding: 0;
    font-weight: 400;
    line-height: 20px;
    text-align: left;
    white-space: nowrap;
    overflow: hidden;
    border-bottom: 1px dotted #888;
  }
  td { padding-left: 2px; border-left: 1px dotted #888; border-right: 1px dotted #888; }
`;
const GroupHead = styled.th`
  && { padding: 0 4px; background: #dcdcdc; border-bottom: 0; }
`;
const Name = styled.th`
  && { padding-left: 12px; color: ${(p) => (p.$dim ? "#858585" : "#111")}; }
`;
const Value = styled.span`
  padding-left: 2px;
  color: ${(p) => (p.$dim ? "#858585" : "#111")};
`;
const ScaleInput = styled.input`
  display: block;
  width: 121px;
  height: 23px;
  margin-left: -2px;
  padding: 0 7px;
  border: 1px solid #111;
  outline: 0;
  background: #fff;
`;
const CellButton = styled.button`
  display: block;
  width: 119px;
  height: 22px;
  margin-left: -1px;
  border: 1px solid #777;
  border-right-width: 2px;
  border-bottom-width: 2px;
  border-radius: 3px;
  background: linear-gradient(#f5f5f5, #d2d2d2);
`;
const Check = styled.input`
  appearance: none;
  display: block;
  width: ${(p) => (p.$green ? 14 : 13)}px;
  height: ${(p) => (p.$green ? 14 : 13)}px;
  margin-left: 1px;
  border: 1px solid ${(p) => (p.$green ? "#3d4a3d" : "#999")};
  background: linear-gradient(135deg, #ddd, #fff);
  &:checked {
    background: #fff;
    &::before {
      content: "";
      display: block;
      width: 9px;
      height: 5px;
      margin: 2px 1px;
      border: solid #2a9a1e;
      border-width: 0 0 2px 2px;
      rotate: -45deg;
    }
  }
`;
const DockFoot = styled.div`
  display: flex;
  align-items: center;
  justify-content: space-between;
  height: 28px;
  flex: none;
  padding: 0 1px 0 2px;
  a { color: #2457b8; }
`;
const ApplyButton = styled.button`
  width: 98px;
  height: 24px;
  border: 1px solid #bbb;
  border-radius: 3px;
  color: #888;
  background: #f1f1f1;
`;

const PROPS = [
  { group: "图形" },
  { n: "视图比例", input: "1 : 100" },
  { n: "比例值 1:", v: "100", dim: true },
  { n: "详细程度", v: "精细" },
  { n: "零件可见性", v: "显示原状态" },
  { n: "可见性/图形...", button: "编辑..." },
  { n: "图形显示选项", button: "编辑..." },
  { n: "规程", v: "建筑" },
  { n: "默认分析显示...", v: "无" },
  { n: "日光路径", check: true },
  { group: "标识数据" },
  { n: "视图样板", button: "<无>" },
  { n: "视图名称", v: "{3D}" },
];

/* ---------- status bar ---------- */

const StatusBar = styled.footer`
  display: flex;
  align-items: center;
  height: 23px;
  flex: none;
  border-top: 1px solid #888;
  background: linear-gradient(#e8e8e8, #c9c9c9);
`;
const Hint = styled.div`
  width: 370px;
  flex: none;
  padding-left: 2px;
  overflow: hidden;
  white-space: nowrap;
  color: #111;
`;
const StatusButton = styled.button`
  display: flex;
  align-items: center;
  justify-content: center;
  gap: 4px;
  width: ${(p) => p.$w}px;
  height: 22px;
  flex: none;
`;
const StatusSelect = styled.select`
  ${selectSkin}
  width: ${(p) => p.$w}px;
  height: 22px;
  flex: none;
  padding: 2px 3px 0;
  border: 0;
  color: #777;
  background-color: #fafafa;
  background-image: ${caretImage("#777")};
  background-size: 6px 6px;
  background-position: right 9px top 10px, right 3px top 10px;
`;
const Toggle = styled.label`
  display: flex;
  align-items: center;
  gap: 3px;
  margin-left: auto;
  white-space: nowrap;
`;
const FilterButton = styled.button`
  display: flex;
  align-items: center;
  gap: 3px;
  margin: 0 72px 0 9px;
`;

/* ---------- translucent marks over the window ---------- */

const CourseMark = styled.div`
  position: absolute;
  right: 48px;
  bottom: 6px;
  font: bold 38px/54px "DejaVu Sans", sans-serif;
  color: rgba(208, 50, 82, 0.42);
  white-space: nowrap;
  pointer-events: none;
  span { font-family: "Noto Sans CJK SC", sans-serif; font-size: 36px; }
`;
const StudioMark = styled.div`
  position: absolute;
  left: 46px;
  bottom: 8px;
  display: flex;
  align-items: flex-start;
  color: rgba(90, 90, 95, 0.42);
  pointer-events: none;
`;
const StudioName = styled.div`
  margin-left: -10px;
  font: italic 900 40px/38px "Noto Sans CJK SC", sans-serif;
  small {
    display: block;
    padding-left: 4px;
    font: bold 22px/16px "Liberation Sans", sans-serif;
    color: rgba(90, 90, 95, 0.25);
  }
`;

const QUICK = ["open", "save", "box3d", "v", "undo", "v", "redo", "v", "|", "measure", "v", "dimension", "tag", "text"];
const TABS = ["建筑", "结构", "插入", "注释", "分析", "体量和场地", "协作", "视图", "管理", "修改"];
const VIEW_TOOLS = ["hatch", "cube", "sunOff", "shadowOff", "teapot", "cropOff", "crop", "lockHouse", "glasses", "bulb"];

const Cross = ({ size = 9 }) => (
  <svg width={size} height={size} viewBox="0 0 9 9"><path d="M1 1h2l1.500 2L6 1h2L6 4.500 8 8H6L4.500 6 3 8H1l2-3.500z" fill="#fff" stroke="#444" /></svg>
);

export default function App() {
  return (
    <Shell>
      <Global />
      <TitleBar>
        <AppButton aria-label="Revit">
          <svg width="26" height="34" viewBox="0 0 24 32">
            <path d="M3 4l9-3 9 5v7l-5 4 7 8-5 3-8-9-1 9-5 3-4-4 3-8z" fill="#6e2a5e" />
            <path d="M5 3h8c8 0 8 10 2 11l5 9h-4l-5-9-2 1 1 8-4-1zM9 6v5c6 1 8-5 3-5z" fill="#c98bb9" fillRule="evenodd" />
            <path d="M2 23l7-7 1 9-4 5z" fill="#8f1a70" />
          </svg>
          <Caret />
        </AppButton>
        {QUICK.map((q, i) =>
          q === "v" ? <ArrowButton key={i} aria-label="more"><Caret $color="#555" /></ArrowButton>
            : q === "|" ? <Divider key={i} />
              : <QuickButton key={i} aria-label={q}><Glyph name={q} /></QuickButton>
        )}
        <QuickButton $wide aria-label="more">
          <svg width="10" height="8" viewBox="0 0 10 8"><path d="M0 0l5 4-5 4zM5 0l5 4-5 4z" fill="#222" /></svg>
        </QuickButton>
        <DocName>11-4-1 - ...</DocName>
        <NextButton aria-label="expand">
          <svg width="6" height="10" viewBox="0 0 6 10"><path d="M0 0l6 5-6 5z" fill="#111" /></svg>
        </NextButton>
        <Search placeholder="键入关键字或短语" aria-label="键入关键字或短语" />
        {["binoculars", "key", "dish", "star", "person"].map((n) => (
          <QuickButton key={n} aria-label={n}><Glyph name={n} /></QuickButton>
        ))}
        <Login>登录</Login>
        <ArrowButton aria-label="more"><Caret $color="#555" /></ArrowButton>
        <QuickButton aria-label="exchange"><Glyph name="exchange" /></QuickButton>
        <Divider />
        <QuickButton aria-label="help"><Glyph name="help" /></QuickButton>
        <ArrowButton aria-label="more"><Caret $color="#555" /></ArrowButton>
        <Caption>
          <CaptionButton aria-label="minimize"><svg width="16" height="14" viewBox="0 0 16 14"><path d="M0 9h16v4H0z" fill="#fff" /></svg></CaptionButton>
          <CaptionButton aria-label="restore">
            <svg width="18" height="16" viewBox="0 0 18 16"><path d="M6 4V1h10v10h-4M2 5h10v10H2zM6 9h2v2H6z" fill="none" stroke="#fff" strokeWidth="2" /></svg>
          </CaptionButton>
          <CaptionButton $close aria-label="close">
            <svg width="16" height="14" viewBox="0 0 16 14"><path d="M1 1h4l3 4 3-4h4l-5 6 5 6h-4L8 9l-3 4H1l5-6z" fill="#fff" stroke="#743" /></svg>
          </CaptionButton>
        </Caption>
      </TitleBar>

      <TabBar>
        {TABS.map((t, i) => <Tab key={t} $active={i === 0}>{t}</Tab>)}
        <RibbonToggle aria-label="ribbon">
          <svg width="18" height="12" viewBox="0 0 18 12"><rect x="1" y="1" width="16" height="10" rx="3" fill="#eee" stroke="#555" /><path d="M6 8l3-4 3 4z" fill="#333" /></svg>
          <Caret $color="#111" />
        </RibbonToggle>
      </TabBar>

      <Ribbon>
        <Panel $w={55} $first>
          <PanelBody $pad={4}><Large icon="cursor" label="修改" w={47} on /></PanelBody>
          <PanelTitle>选择</PanelTitle>
        </Panel>
        <Panel $w={374}>
          <PanelBody>
            <Large icon="wall" label="墙" w={52} arrow />
            <Large icon="door" label="门" w={42} />
            <ToolColumn $w={94}>
              <Indent><Tool icon="window" label="窗" /><Tool icon="component" label="构件" arrow /><Tool icon="column" label="柱" arrow /></Indent>
            </ToolColumn>
            <ToolColumn $w={83}>
              <Tool icon="roof" label="屋顶" arrow /><Tool icon="ceiling" label="天花板" /><Tool icon="floor" label="楼板" arrow />
            </ToolColumn>
            <ToolColumn $w={100}>
              <Tool icon="curtain" label="幕墙 系统" /><Tool icon="curtainGrid" label="幕墙 网格" /><Tool icon="mullion" label="竖梃" />
            </ToolColumn>
          </PanelBody>
          <PanelTitle>构建</PanelTitle>
        </Panel>
        <Panel $w={120}>
          <PanelBody $pad={6}>
            <ToolColumn $w={112}>
              <Tool icon="railing" label="栏杆扶手" arrow /><Tool icon="ramp" label="坡道" /><Tool icon="stair" label="楼梯" arrow />
            </ToolColumn>
          </PanelBody>
          <PanelTitle>楼梯坡道</PanelTitle>
        </Panel>
        <Panel $w={109}>
          <PanelBody $pad={6}>
            <ToolColumn $w={102}>
              <Tool icon="modelText" label="模型 文字" /><Tool icon="modelLine" label="模型 线" /><Tool icon="modelGroup" label="模型 组" arrow />
            </ToolColumn>
          </PanelBody>
          <PanelTitle>模型</PanelTitle>
        </Panel>
        <Panel $w={250}>
          <PanelBody $pad={6}>
            <ToolColumn $w={123}>
              <Tool icon="roomOff" label="房间" disabled /><Tool icon="roomSep" label="房间  分隔" /><Tool icon="roomTag" label="标记  房间" arrow />
            </ToolColumn>
            <ToolColumn $w={119}>
              <Tool icon="area" label="面积" arrow /><Tool icon="areaOff" label="面积  边界" disabled /><Tool icon="areaTag" label="标记  面积" arrow />
            </ToolColumn>
          </PanelBody>
          <PanelTitle>房间和面积 <Caret /></PanelTitle>
        </Panel>
        <Panel $w={185}>
          <PanelBody $pad={2}>
            <Large icon="byFace" label={"按\n面"} w={48} />
            <Large icon="shaft" label="竖井" w={48} />
            <ToolColumn $w={84}>
              <Indent $n={4}><Tool icon="openWall" label="墙" /><Tool icon="vertical" label="垂直" /><Tool icon="dormer" label="老虎窗" /></Indent>
            </ToolColumn>
          </PanelBody>
          <PanelTitle>洞口</PanelTitle>
        </Panel>
        <Panel $w={76}>
          <PanelBody $pad={6}>
            <ToolColumn $w={68} $top={15}>
              <Tool icon="level" label="标高" disabled /><Tool icon="grid" label="轴网" disabled />
            </ToolColumn>
          </PanelBody>
          <PanelTitle>基准</PanelTitle>
        </Panel>
        <Panel $w={85}>
          <PanelBody $pad={2}>
            <Large icon="set" label="设置" w={48} />
            <ToolColumn $w={30}>
              <Indent $n={4}><Tool icon="showPlane" title="显示" /><Tool icon="refPlane" title="参照平面" disabled /><Tool icon="viewer" title="查看器" /></Indent>
            </ToolColumn>
          </PanelBody>
          <PanelTitle>工作平面</PanelTitle>
        </Panel>
      </Ribbon>
      <OptionsBar />

      <Workspace>
        <Dock $w={246} $right={3}>
          <DockTitle>11-4-1 - 项目浏览器<CloseButton aria-label="close"><Cross /></CloseButton></DockTitle>
          <Row $grow>
            <Tree role="tree">
              {TREE.map((r, i) => (
                <TreeRow key={i} role="treeitem" $bold={r.bold}>
                  {r.g.map((kind, j) => (
                    <Guide key={j} $kind={kind}>
                      {r.x && j === r.g.length - 1 && (
                        <Expander aria-label={r.t}>
                          <svg width="6" height="6" viewBox="0 0 6 6"><path d={r.x === "+" ? "M0 3h6M3 0v6" : "M0 3h6"} stroke="#333" /></svg>
                        </Expander>
                      )}
                    </Guide>
                  ))}
                  {r.icon && <Glyph name={r.icon} size={17} />}
                  <TreeLabel $icon={r.icon} $selected={r.sel}>{r.t}</TreeLabel>
                </TreeRow>
              ))}
            </Tree>
            <Scroll len={76} before={1} after={80} />
          </Row>
          <Row><Scroll across grow len={108} before={2} after={52} /><BarButton as="span" /></Row>
        </Dock>

        <ViewFrame>
          <Row $grow>
            <Canvas>
              <Scene />
              <WindowControls>
                {["M1 7h12v3H1z", "M5 4V1h8v9h-3M2 4h8v9H2zM5 7h2v2H5z", "M1 2h4l2 3 2-3h4L9 7l4 5H9L7 9l-2 3H1l4-5z"].map((d) => (
                  <button key={d} aria-label="window"><svg width="14" height="14" viewBox="0 0 14 14"><path d={d} fill="#fff" stroke="#555" strokeWidth="1.4" /></svg></button>
                ))}
              </WindowControls>
              <ViewCube>
                <svg width="88" height="70" viewBox="0 0 88 70" fill="none">
                  <ellipse cx="44" cy="45" rx="36" ry="17" stroke="#f2f2f2" strokeWidth="9" />
                  <ellipse cx="44" cy="45" rx="41" ry="22" stroke="#ccc" strokeDasharray="2 1" />
                  <ellipse cx="44" cy="45" rx="31" ry="13" stroke="#ddd" strokeDasharray="2 1" />
                  <ellipse cx="47" cy="44" rx="24" ry="7" fill="#d4d4d4" />
                  <g stroke="#999" fill="#f3f3f3">
                    <path d="M21 14L40 4l25 6-15 12z" /><path d="M21 14l29 8v28l-28-9z" fill="#eaeaea" /><path d="M50 22l15-12v26L50 50z" fill="#dfdfdf" />
                    <path d="M38 9l4 6M45 7l-6 9M28 23l1 13M32 24v13M27 27h15M36 26v10M41 24v14M29 20l2 4M39 22l-2 3M55 28l6-6M57 26v9M54 35l7-5" fill="none" />
                    <path d="M8 31l10-4M9 27l9 5M12 26l2 8M14 61l13-6M16 55l12 6M20 53l3 10M74 53l10-5M76 48l7 6M79 47v8" stroke="#888" fill="none" />
                  </g>
                </svg>
              </ViewCube>
              <NavBar>
                <svg width="34" height="118" viewBox="0 0 34 118" fill="none">
                  <rect x="1" y="1" width="32" height="116" rx="5" fill="#b7bfb7" fillOpacity=".55" stroke="#8f968f" strokeWidth="2" />
                  <circle cx="27" cy="7" r="4" fill="#909590" /><path d="M25 5l4 4M29 5l-4 4" stroke="#fff" />
                  <path d="M17 21h11v11a11 11 0 1 1-11-11z" fill="#e8e8e8" stroke="#8b8f8b" />
                  <circle cx="17" cy="32" r="6" fill="#eee" stroke="#8b8f8b" strokeWidth="2" /><path d="M10 39l3-3M24 39l-3-3" stroke="#888" />
                  <path d="M14 52l3 3 3-3zM14 94l3 3 3-3z" fill="#687368" />
                  <path d="M5 58h24" stroke="#7d887d" />
                  <path d="M10 67h10v11H10z" fill="#7fb865" stroke="#5a7d4d" /><circle cx="20" cy="77" r="3" fill="#b9cfbd" stroke="#60705f" /><path d="M22 79l3 3" stroke="#60705f" strokeWidth="2" />
                  <circle cx="27" cy="110" r="4" fill="#69776a" /><path d="M25 109h4M25 111h4" stroke="#ddd" />
                </svg>
              </NavBar>
            </Canvas>
            <Scroll len={19} before={23} after={22} />
          </Row>
          <ViewControls>
            <Scale>1 : 100</Scale>
            {VIEW_TOOLS.map((n) => <ViewButton key={n} aria-label={n}><Glyph name={n} size={17} /></ViewButton>)}
            <Scroll across grow len={19} before={142} after={139} />
            <svg width="20" height="20" viewBox="0 0 20 20"><path d="M12 6h2M8 10h2M12 10h2M4 14h2M8 14h2M12 14h2" stroke="#999" strokeWidth="2" /></svg>
          </ViewControls>
        </ViewFrame>

        <Dock $w={277} $right={5}>
          <DockTitle>属性<CloseButton aria-label="close"><Cross /></CloseButton></DockTitle>
          <TypeSelector>
            <Preview>
              <svg width="38" height="38" viewBox="0 0 38 38" stroke="#6c6f71" strokeWidth="1.5">
                <path d="M5 16v16l13 5V17L12 8z" fill="#f7f7f7" /><path d="M18 18v19l15-7V14z" fill="#d7dadb" />
                <path d="M1 16L12 4l12-3 13 13-18 8-8-12-9 8z" fill="#dedede" /><path d="M8 22l5 2v10l-5-2z" fill="#555" />
              </svg>
            </Preview>
            三维视图
            <Caret />
          </TypeSelector>
          <Instance>
            <InstanceSelect aria-label="三维视图"><option>三维视图: {"{3D}"}</option></InstanceSelect>
            <EditType><Glyph name="editType" size={17} />编辑类型</EditType>
          </Instance>
          <Row $grow>
            <TableBox>
              <PropertyTable>
                <colgroup><col /><col /></colgroup>
                <tbody>
                  {PROPS.map((p) => p.group ? (
                    <tr key={p.group}>
                      <GroupHead colSpan={2}>
                        {p.group}
                        <Chevrons><svg width="8" height="10" viewBox="0 0 8 10"><path d="M1 4l3-3 3 3M1 9l3-3 3 3" fill="none" stroke="#222" strokeWidth="1.5" /></svg></Chevrons>
                      </GroupHead>
                    </tr>
                  ) : (
                    <tr key={p.n}>
                      <Name scope="row" $dim={p.dim}>{p.n}</Name>
                      <td>
                        {p.input && <ScaleInput defaultValue={p.input} aria-label={p.n} />}
                        {p.button && <CellButton>{p.button}</CellButton>}
                        {p.check && <Check type="checkbox" aria-label={p.n} />}
                        {p.v && <Value $dim={p.dim}>{p.v}</Value>}
                      </td>
                    </tr>
                  ))}
                </tbody>
              </PropertyTable>
            </TableBox>
            <Scroll len={95} before={1} after={40} />
          </Row>
          <DockFoot><a href="#help">属性帮助</a><ApplyButton>应用</ApplyButton></DockFoot>
        </Dock>
      </Workspace>

      <StatusBar>
        <Hint>单击可进行选择; 按 Tab 键并单击可选择其他项目; 按 C</Hint>
        <StatusButton $w={20} aria-label="worksets"><Glyph name="worksets" size={17} /></StatusButton>
        <StatusButton $w={6} as="span" />
        <StatusSelect $w={204} aria-label="workset"><option> </option></StatusSelect>
        <StatusButton $w={52}><Glyph name="request" size={17} />:0</StatusButton>
        <StatusButton $w={40} aria-label="options"><Glyph name="options" size={17} /></StatusButton>
        <StatusButton $w={22} aria-label="pick"><Glyph name="pick" size={17} /></StatusButton>
        <StatusSelect $w={155} aria-label="主模型"><option>主模型</option></StatusSelect>
        <Toggle><Check $green type="checkbox" defaultChecked />单击和拖曳</Toggle>
        <FilterButton><Glyph name="filter" size={17} />:0</FilterButton>
      </StatusBar>

      <CourseMark>RevitArchitecture2013<span>建筑设计火星课堂</span></CourseMark>
      <StudioMark>
        <svg width="68" height="54" viewBox="0 0 68 54" fill="none">
          <path d="M64 6C30-4-4 30 6 44c4 6 14 5 22 2C10 46 8 30 26 16 38 7 50 3 64 6z" fill="#dd4357" fillOpacity=".5" />
          <path d="M34 12c22-6 22 8 10 22-10 10-24 12-30 4 12 4 22-2 28-10 6-10 2-14-8-16z" fill="#4d9cc9" fillOpacity=".5" />
        </svg>
        <StudioName>火星时代<small>www.hxsd.com</small></StudioName>
      </StudioMark>
    </Shell>
  );
}
